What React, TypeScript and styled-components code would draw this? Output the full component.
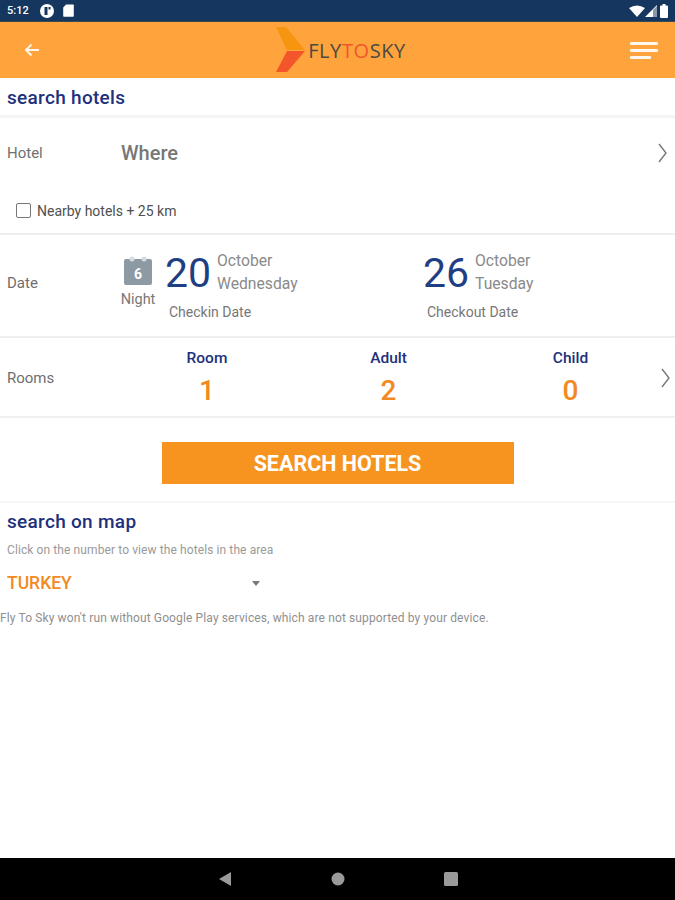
import React from "react";
import styled, { createGlobalStyle } from "styled-components";

const Global = createGlobalStyle`
  html, body { margin: 0; padding: 0; background: #fff; }
  body { font-family: Roboto, "Liberation Sans", sans-serif; }
`;

const Page = styled.div`
  width: 675px;
  height: 900px;
  display: flex;
  flex-direction: column;
  overflow: hidden;
`;
const StatusBar = styled.div`
  height: 21px;
  background: #14365f;
  border-bottom: 1px solid #3a4a50;
  display: flex;
  align-items: center;
  padding: 0 7px;
  color: #fff;
  gap: 8px;
  flex: none;
`;
const Time = styled.span`
  font-size: 11px;
  font-weight: 500;
  margin-right: 2px;
`;
const Spacer = styled.div`
  flex: 1;
`;
const AppBar = styled.div`
  height: 56px;
  background: #ffa33c;
  display: flex;
  align-items: center;
  justify-content: space-between;
  padding: 0 17px 0 24px;
  flex: none;
`;
const Logo = styled.div`
  display: flex;
  align-items: center;
  font-family: "Open Sans", sans-serif;
  font-size: 20px;
  letter-spacing: 0.6px;
  color: #4a4a42;
  margin-left: 12px;
`;
const LogoMark = styled.svg`
  width: 30px;
  height: 46px;
  margin-right: 2px;
`;
const LogoTo = styled.span`
  color: #f0562c;
`;
const LogoWords = styled.span`
  margin-top: 0;
`;
const Heading = styled.div`
  font-size: 19px;
  font-weight: 500;
  letter-spacing: 0.3px;
  color: #22307c;
  padding-left: 7px;
  line-height: 21px;
`;
const TopHead = styled.div`
  height: 40px;
  padding-top: 9px;
  box-sizing: border-box;
  border-bottom: 3px solid #f5f5f5;
  flex: none;
`;
const RowLabel = styled.div<{ $nudge?: number }>`
  width: 114px;
  padding-left: 7px;
  box-sizing: border-box;
  font-size: 15px;
  color: #6f6f6f;
  flex: none;
  margin-top: ${(p) => p.$nudge ?? 0}px;
`;
const HotelRow = styled.div`
  height: 70px;
  display: flex;
  align-items: center;
  flex: none;
`;
const Where = styled.div`
  font-size: 20px;
  font-weight: 500;
  color: #777;
  flex: 1;
  margin-left: 7px;
`;
const Chevron = styled.svg<{ $shift?: number }>`
  width: 11px;
  height: 22px;
  margin-right: 7px;
  margin-left: ${(p) => p.$shift ?? 0}px;
  flex: none;
`;
const NearbyRow = styled.div`
  height: 47px;
  display: flex;
  align-items: flex-start;
  padding: 15px 0 0 16px;
  box-sizing: border-box;
  border-bottom: 2px solid #eeeeee;
  flex: none;
`;
const CheckBox = styled.div`
  width: 13px;
  height: 13px;
  border: 1.5px solid #777;
  border-radius: 2px;
  flex: none;
`;
const NearbyText = styled.span`
  font-size: 14px;
  color: #4f4f4f;
  margin-left: 6px;
  line-height: 16px;
`;
const DateRow = styled.div`
  height: 103px;
  display: flex;
  box-sizing: border-box;
  padding-bottom: 4px;
  border-bottom: 2px solid #eeeeee;
  align-items: center;
  flex: none;
`;
const NightCol = styled.div`
  width: 48px;
  display: flex;
  flex-direction: column;
  align-items: center;
  font-size: 14.5px;
  color: #777;
  gap: 5px;
  flex: none;
  margin-top: -3px;
  margin-right: -2px;
`;
const DateBlock = styled.div<{ $width: number }>`
  width: ${(p) => p.$width}px;
  flex: none;
  margin-left: 5px;
`;
const DateTop = styled.div`
  display: flex;
  align-items: center;
  height: 50px;
`;
const DateNum = styled.div`
  font-size: 41px;
  color: #1f3f84;
  width: 52px;
  line-height: 44px;
`;
const MonthCol = styled.div`
  font-size: 15.7px;
  color: #8a8a8a;
  line-height: 23px;
  margin-top: -2px;
`;
const DateCaption = styled.div`
  font-size: 14px;
  color: #777;
  margin: 6px 0 0 4px;
`;
const RoomsRow = styled.div`
  height: 80px;
  box-sizing: border-box;
  padding-top: 2px;
  display: flex;
  align-items: center;
  border-bottom: 2px solid #f0f0f0;
  flex: none;
`;
const Counter = styled.div<{ $width: number }>`
  width: ${(p) => p.$width}px;
  text-align: center;
  flex: none;
`;
const CounterLabel = styled.div`
  font-size: 15.5px;
  font-weight: 500;
  color: #22307c;
  line-height: 18px;
`;
const CounterValue = styled.div`
  font-size: 28px;
  font-weight: 500;
  color: #f28a22;
  line-height: 33px;
  margin-top: 7px;
`;
const ButtonWrap = styled.div`
  height: 85px;
  box-sizing: border-box;
  padding-top: 7px;
  display: flex;
  justify-content: center;
  align-items: center;
  border-bottom: 2px solid #f5f5f5;
  flex: none;
`;
const SearchButton = styled.div`
  width: 352px;
  height: 42px;
  background: #f7931f;
  color: #fff;
  font-size: 21.5px;
  font-weight: 700;
  display: flex;
  align-items: center;
  justify-content: center;
`;
const MapSection = styled.div`
  padding-top: 8px;
  flex: 1;
`;
const MapHint = styled.div`
  font-size: 12px;
  letter-spacing: 0.1px;
  color: #9a9a9a;
  padding-left: 7px;
  margin-top: 11px;
  line-height: 14px;
`;
const CountryRow = styled.div`
  display: flex;
  align-items: center;
  height: 24px;
  margin-top: 14px;
  padding-left: 7px;
`;
const Country = styled.div`
  width: 245px;
  font-size: 17.5px;
  font-weight: 500;
  color: #f28a22;
`;
const Caret = styled.div`
  width: 0;
  height: 0;
  border-left: 4px solid transparent;
  border-right: 4px solid transparent;
  border-top: 5px solid #777;
`;
const Notice = styled.div`
  font-size: 12px;
  color: #8f8f8f;
  margin-top: 16px;
  line-height: 14px;
  letter-spacing: 0.125px;
`;
const NavBar = styled.div`
  height: 42px;
  background: #000;
  display: flex;
  align-items: center;
  justify-content: center;
  gap: 99px;
  flex: none;
`;

const ChevronIcon = ({ shift }: { shift?: number }) => (
  <Chevron viewBox="0 0 11 22" $shift={shift}>
    <path d="M2 2 L9 11 L2 20" fill="none" stroke="#777" strokeWidth="1.4" />
  </Chevron>
);

export default function App() {
  return (
    <Page>
      <Global />
      <StatusBar>
        <Time>5:12</Time>
        <svg width="16" height="16" viewBox="0 0 16 16">
          <circle cx="8" cy="8" r="7" fill="#fff" />
          <rect x="5.5" y="4" width="3" height="8" fill="#14365f" />
          <rect x="9.5" y="4" width="2" height="2.5" fill="#14365f" />
        </svg>
        <svg width="11" height="13" viewBox="0 0 11 13">
          <path d="M3 0.5 H10 a0.8 0.8 0 0 1 0.8 0.8 V12 a0.8 0.8 0 0 1 -0.8 0.8 H1 a0.8 0.8 0 0 1 -0.8 -0.8 V3.5 Z" fill="#fff" />
        </svg>
        <Spacer />
        <svg width="16" height="12" viewBox="0 0 16 12">
          <path d="M0 3 Q8 -2 16 3 L8 12 Z" fill="#fff" />
        </svg>
        <svg width="13" height="12" viewBox="0 0 13 12" style={{ marginLeft: -8 }}>
          <path d="M0 12 L12 0 V12 Z" fill="#fff" />
          <path d="M8 12 V5 L12 1 V12 Z" fill="#8a98a8" />
        </svg>
        <svg width="8" height="14" viewBox="0 0 8 14" style={{ marginLeft: -6 }}>
          <rect x="2.5" y="0" width="3" height="2" fill="#fff" />
          <rect x="0" y="1.5" width="8" height="12.5" rx="1" fill="#fff" />
        </svg>
      </StatusBar>
      <AppBar>
        <svg width="16" height="14" viewBox="0 0 16 14">
          <path d="M15 7 H2 M7.5 1.5 L2 7 L7.5 12.5" fill="none" stroke="#fff" strokeWidth="2" opacity="0.9" />
        </svg>
        <Logo>
          <LogoMark viewBox="0 0 30 46">
            <path d="M0 0 H10 L29 23 H11 Z" fill="#f79410" />
            <path d="M11 24 H29 L11 45 H0 Z" fill="#f4562c" />
          </LogoMark>
          <LogoWords>
            FLY<LogoTo>TO</LogoTo>SKY
          </LogoWords>
        </Logo>
        <svg width="28" height="17" viewBox="0 0 28 17">
          <rect x="0" y="0" width="28" height="3" rx="1" fill="#fff" opacity="0.92" />
          <rect x="0" y="7" width="28" height="3" rx="1" fill="#fff" opacity="0.92" />
          <rect x="0" y="14" width="21" height="3" rx="1" fill="#fff" opacity="0.92" />
        </svg>
      </AppBar>
      <TopHead>
        <Heading>search hotels</Heading>
      </TopHead>
      <HotelRow>
        <RowLabel>Hotel</RowLabel>
        <Where>Where</Where>
        <ChevronIcon />
      </HotelRow>
      <NearbyRow>
        <CheckBox />
        <NearbyText>Nearby hotels + 25 km</NearbyText>
      </NearbyRow>
      <DateRow>
        <RowLabel $nudge={-2}>Date</RowLabel>
        <NightCol>
          <svg width="30" height="30" viewBox="0 0 30 30">
            <rect x="1" y="3" width="28" height="26" rx="2" fill="#8e9aa3" />
            <circle cx="9" cy="3" r="2.5" fill="#d5dadd" />
            <circle cx="21" cy="3" r="2.5" fill="#d5dadd" />
            <text x="15" y="23" textAnchor="middle" fontSize="14" fontWeight="700" fontFamily="Roboto" fill="#fff">6</text>
          </svg>
          <span>Night</span>
        </NightCol>
        <DateBlock $width={253}>
          <DateTop>
            <DateNum>20</DateNum>
            <MonthCol>October<br />Wednesday</MonthCol>
          </DateTop>
          <DateCaption>Checkin Date</DateCaption>
        </DateBlock>
        <DateBlock $width={200}>
          <DateTop>
            <DateNum>26</DateNum>
            <MonthCol>October<br />Tuesday</MonthCol>
          </DateTop>
          <DateCaption>Checkout Date</DateCaption>
        </DateBlock>
      </DateRow>
      <RoomsRow>
        <RowLabel>Rooms</RowLabel>
        <Counter $width={186}>
          <CounterLabel>Room</CounterLabel>
          <CounterValue>1</CounterValue>
        </Counter>
        <Counter $width={177}>
          <CounterLabel>Adult</CounterLabel>
          <CounterValue>2</CounterValue>
        </Counter>
        <Counter $width={187}>
          <CounterLabel>Child</CounterLabel>
          <CounterValue>0</CounterValue>
        </Counter>
        <ChevronIcon shift={-4} />
      </RoomsRow>
      <ButtonWrap>
        <SearchButton>SEARCH HOTELS</SearchButton>
      </ButtonWrap>
      <MapSection>
        <Heading>search on map</Heading>
        <MapHint>Click on the number to view the hotels in the area</MapHint>
        <CountryRow>
          <Country>TURKEY</Country>
          <Caret />
        </CountryRow>
        <Notice>Fly To Sky won't run without Google Play services, which are not supported by your device.</Notice>
      </MapSection>
      <NavBar>
        <svg width="14" height="16" viewBox="0 0 14 16">
          <path d="M13 1 V15 L1 8 Z" fill="#9a9a9a" />
        </svg>
        <svg width="14" height="14" viewBox="0 0 14 14">
          <circle cx="7" cy="7" r="6.5" fill="#9a9a9a" />
        </svg>
        <svg width="14" height="14" viewBox="0 0 14 14">
          <rect x="0" y="0" width="14" height="14" rx="1.5" fill="#9a9a9a" />
        </svg>
      </NavBar>
    </Page>
  );
}
